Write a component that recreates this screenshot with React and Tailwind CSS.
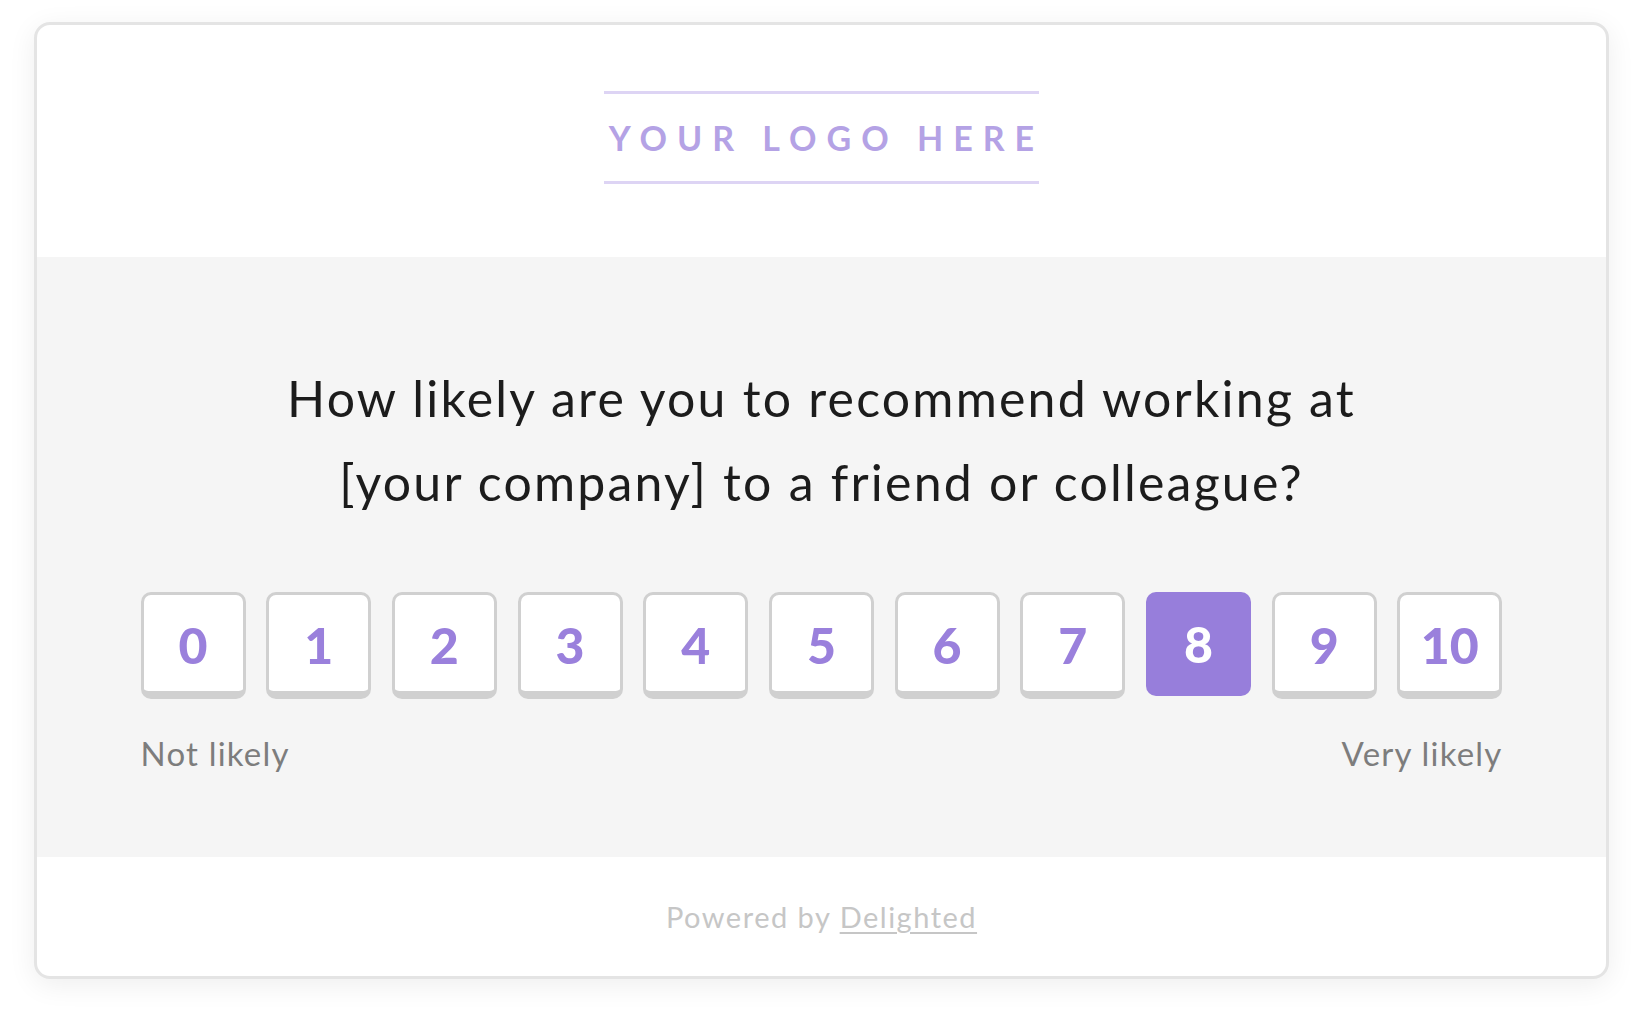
const SCORES = [0, 1, 2, 3, 4, 5, 6, 7, 8, 9, 10];
const SELECTED = 8;

export default function App() {
  return (
    <div className="min-h-screen bg-white pt-[22px] pl-[34px]" style={{ fontFamily: "Lato, 'Open Sans', sans-serif" }}>
      <div className="w-[1575px] h-[957px] rounded-[16px] border-[3px] border-[#e4e4e4] bg-white overflow-hidden flex flex-col shadow-[0_6px_28px_rgba(0,0,0,0.07)]">
        {/* Logo */}
        <div className="h-[232px] flex flex-col items-center pt-[66px]">
          <div className="w-[435px] h-[3px] bg-[#ddd4f4]" />
          <div className="h-[87px] flex items-center justify-center pl-[10px] text-[34px] font-bold tracking-[10px] text-[#b4a2e5] leading-none">
            YOUR LOGO HERE
          </div>
          <div className="w-[435px] h-[3px] bg-[#ddd4f4]" />
        </div>

        {/* Question */}
        <div className="h-[600px] bg-[#f5f5f5] flex flex-col items-center pt-[99px]">
          <h1 className="text-[50px] leading-[84px] tracking-[2.2px] text-[#1c1c1c] text-center font-normal">
            How likely are you to recommend working at
            <br />
            [your company] to a friend or colleague?
          </h1>

          <div className="mt-[68px] w-[1362px] flex justify-between items-start">
            {SCORES.map((n) =>
              n === SELECTED ? (
                <button key={n} className="w-[105px] h-[104px] rounded-[10px] bg-[#977edb] text-white text-[50px] font-black leading-none flex items-center justify-center">
                  {n}
                </button>
              ) : (
                <button key={n} className="w-[105px] h-[107px] rounded-[10px] bg-white border-[3px] border-b-[8px] border-[#d0d0d0] text-[#9a80dc] text-[50px] font-black leading-none flex items-center justify-center pt-[4px]">
                  {n}
                </button>
              )
            )}
          </div>

          <div className="mt-[35px] w-[1362px] flex justify-between text-[33px] leading-[38px] tracking-[1.2px] text-[#7d7d7d]">
            <span>Not likely</span>
            <span>Very likely</span>
          </div>
        </div>

        {/* Footer */}
        <div className="flex-1 flex items-center justify-center text-[29px] tracking-[1.5px] text-[#c6c6c6]">
          <span>
            Powered by <a href="#" className="underline underline-offset-4 decoration-[2px]">Delighted</a>
          </span>
        </div>
      </div>
    </div>
  );
}
